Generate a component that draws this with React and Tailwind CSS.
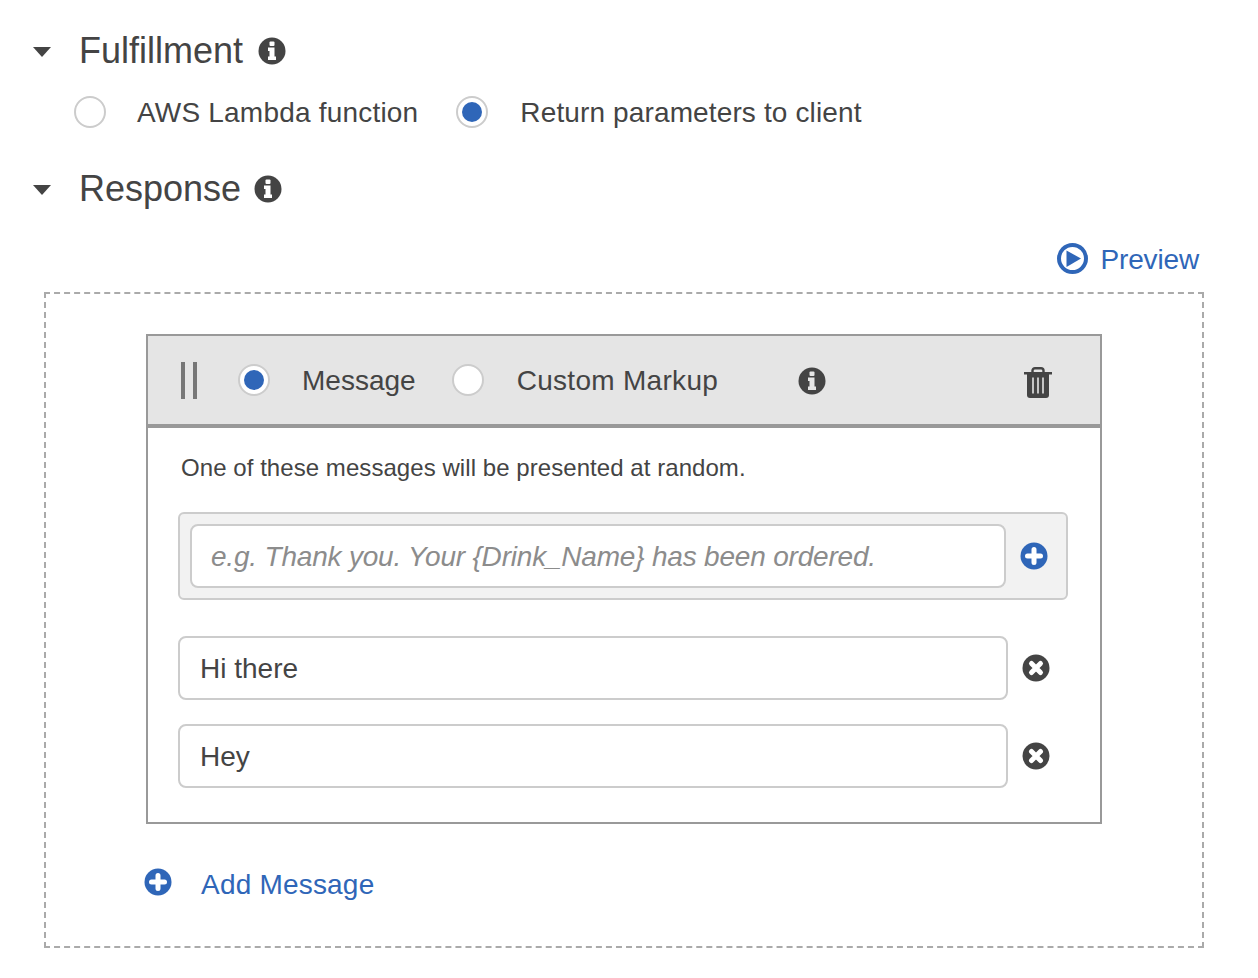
import React from "react";

const BLUE = "#2f66b8";
const DARK = "#444";

const Caret = () => (
  <svg width="18" height="10" viewBox="0 0 18 10" className="shrink-0">
    <path d="M0 0H18L9 10Z" fill={DARK} />
  </svg>
);

const Radio = ({ checked, className = "" }) => (
  <span className={`flex h-8 w-8 shrink-0 items-center justify-center rounded-full border-2 border-[#ccc] bg-white ${className}`}>
    {checked && <span className="h-5 w-5 rounded-full bg-[#2f66b8]" />}
  </span>
);

const InfoIcon = ({ className = "", hole = "#fff" }) => (
  <svg width="28" height="28" viewBox="0 0 28 28" className={`shrink-0 ${className}`}>
    <circle cx="14" cy="14" r="13.5" fill={DARK} />
    <rect x="11.5" y="4.5" width="5" height="4.5" rx="1" fill={hole} />
    <path d="M10 10.5H16.5V19.5H18V23H10V19.5H11.5V14H10Z" fill={hole} />
  </svg>
);

const PlusIcon = ({ className = "" }) => (
  <svg width="28" height="28" viewBox="0 0 28 28" className={`shrink-0 ${className}`}>
    <circle cx="14" cy="14" r="13.5" fill={BLUE} />
    <path d="M14 7.5V20.5M7.5 14H20.5" stroke="#fff" strokeWidth="5" strokeLinecap="round" />
  </svg>
);

const CloseIcon = ({ className = "" }) => (
  <svg width="28" height="28" viewBox="0 0 28 28" className={`shrink-0 ${className}`}>
    <circle cx="14" cy="14" r="13.5" fill={DARK} />
    <path d="M9.5 9.5L18.5 18.5M18.5 9.5L9.5 18.5" stroke="#fff" strokeWidth="5" strokeLinecap="round" />
  </svg>
);

const PlayIcon = () => (
  <svg width="31" height="31" viewBox="0 0 31 31" className="-mt-1 shrink-0">
    <circle cx="15.5" cy="15.5" r="13.5" fill="none" stroke={BLUE} strokeWidth="4" />
    <path d="M9.5 7.5L24 15.5L9.5 24Z" fill={BLUE} />
  </svg>
);

const TrashIcon = () => (
  <svg width="28" height="31" viewBox="0 0 28 31">
    <path d="M8.5 6V3.5C8.5 2 9.5 1.2 11 1.2H17C18.5 1.2 19.5 2 19.5 3.5V6" fill="none" stroke={DARK} strokeWidth="2.4" />
    <path d="M0 5H28V7.5H0Z" fill={DARK} />
    <path d="M3 7H25V28C25 30 24 31 22 31H6C4 31 3 30 3 28Z" fill={DARK} />
    <path d="M9 10.5V26.5M14 10.5V26.5M19 10.5V26.5" stroke="#e5e5e5" strokeWidth="1.6" />
  </svg>
);

const Section = ({ title, iconGap, className = "" }) => (
  <div className={`flex h-10 items-center ${className}`}>
    <span className="ml-[33px] mt-1"><Caret /></span>
    <h2 className={`ml-7 mt-0.5 text-[36px] font-normal text-[#444] ${iconGap}`}>{title}</h2>
    <InfoIcon className="mt-0.5" />
  </div>
);

const MessageRow = ({ text, className = "" }) => (
  <div className={`flex items-center ${className}`}>
    <div className="flex h-16 w-[830px] items-center rounded-lg border-2 border-[#ccc] bg-white pl-5 pt-0.5 text-[28px] text-[#444]">
      {text}
    </div>
    <CloseIcon className="ml-3.5" />
  </div>
);

export default function App() {
  return (
    <div className="h-[978px] w-[1258px] overflow-hidden bg-white pt-[30px] font-['Liberation_Sans',Arial,sans-serif]">
      <Section title="Fulfillment" iconGap="mr-[15px]" />

      <div className="mt-[22px] flex h-10 items-center pl-[74px] text-[28px] text-[#444]">
        <Radio />
        <span className="ml-[31px] mt-0.5 tracking-[0.2px]">AWS Lambda function</span>
        <Radio checked className="ml-[38px]" />
        <span className="ml-8 mt-0.5 tracking-[0.13px]">Return parameters to client</span>
      </div>

      <Section title="Response" iconGap="mr-[13px]" className="mt-9" />

      <div className="mt-8 flex h-10 w-[1199px] items-center justify-end text-[28px] text-[#2f66b8]">
        <PlayIcon />
        <span className="ml-3 tracking-[-0.15px]">Preview</span>
      </div>

      <div className="ml-11 mt-3 h-[656px] w-[1160px] border-2 border-dashed border-[#aaa] pl-[100px] pt-10">
        <div className="h-[490px] w-[956px] border-2 border-[#999]">
          <div className="flex h-[92px] items-center border-b-4 border-[#999] bg-[#e5e5e5] text-[28px] text-[#444]">
            <div className="ml-[33px] flex h-[37px] gap-2">
              <span className="w-1 bg-[#777]" />
              <span className="w-1 bg-[#777]" />
            </div>
            <Radio checked className="ml-[41px]" />
            <span className="ml-8 mt-0.5">Message</span>
            <Radio className="ml-9" />
            <span className="ml-[33px] mt-0.5 tracking-[0.3px]">Custom Markup</span>
            <InfoIcon className="ml-20 mt-0.5" hole="#e5e5e5" />
            <span className="ml-[198px] mt-1 flex"><TrashIcon /></span>
          </div>

          <div className="px-[30px]">
            <p className="ml-[3px] mt-[26px] text-2xl leading-7 tracking-[0.06px] text-[#444]">One of these messages will be presented at random.</p>

            <div className="mt-[30px] flex h-[88px] w-[890px] items-center rounded-md border-2 border-[#ccc] bg-[#f2f2f2] pl-2.5">
              <div className="flex h-16 w-[816px] items-center rounded-lg border-2 border-[#ccc] bg-white pl-[19px] pt-0.5 text-[28px] italic tracking-[-0.2px] text-[#8c8c8c]">
                e.g. Thank you. Your {"{Drink_Name}"} has been ordered.
              </div>
              <PlusIcon className="ml-3.5" />
            </div>

            <MessageRow text="Hi there" className="mt-9" />
            <MessageRow text="Hey" className="mt-6" />
          </div>
        </div>

        <div className="mt-10 flex items-center text-[28px] text-[#2f66b8]">
          <PlusIcon className="-ml-0.5 -mt-1.5" />
          <span className="ml-[29px] tracking-[0.2px]">Add Message</span>
        </div>
      </div>
    </div>
  );
}
